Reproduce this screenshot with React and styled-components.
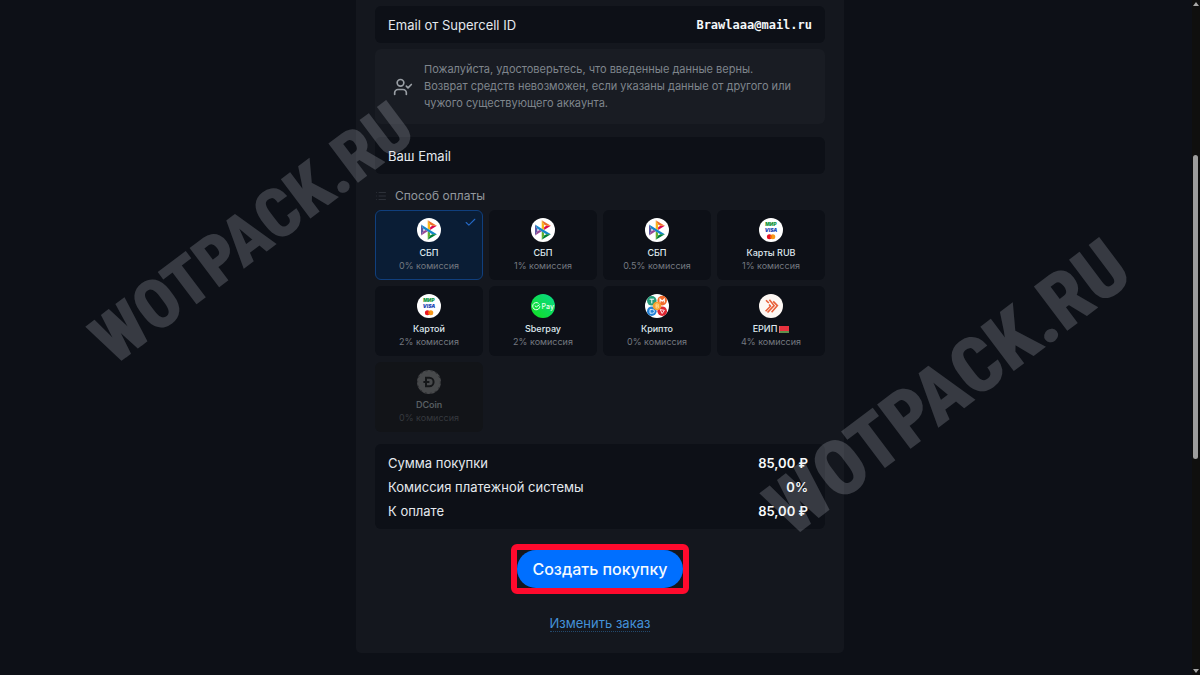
import React, { useState } from "react";
import styled, { createGlobalStyle, css } from "styled-components";
import { Check, List, UserCheck } from "lucide-react";

const GlobalStyle = createGlobalStyle`
  * {
    box-sizing: border-box;
  }
  body {
    margin: 0;
    min-height: 100vh;
    background-color: #0d1017;
    font-family: "Inter", "Liberation Sans", sans-serif;
    color: #e4e9ee;
    overflow: hidden;
  }
`;

const Page = styled.div`
  position: relative;
  min-height: 100vh;
  overflow: hidden;
`;

const Panel = styled.form`
  width: 100%;
  max-width: 488px;
  margin: 0 auto;
  padding: 6px 19px 21px;
  display: flex;
  flex-direction: column;
  background-color: #14171e;
  border-radius: 0 0 5px 5px;
`;

const Field = styled.div`
  display: flex;
  align-items: center;
  min-height: 37px;
  padding: 0 13px;
  background-color: #0d1017;
  border-radius: 6px;
`;

const FieldLabel = styled.label`
  font-size: 13px;
  line-height: 20px;
`;

const FieldInput = styled.input`
  flex: 1;
  min-width: 0;
  padding: 0;
  border: 0;
  outline: none;
  background: transparent;
  color: #f4f7f9;
  font-family: "DejaVu Sans Mono", monospace;
  font-size: 12px;
  font-weight: 700;
  text-align: right;
`;

const Notice = styled.div`
  display: flex;
  align-items: center;
  gap: 11px;
  margin: 6px 0 13px;
  padding: 12px 18px;
  background-color: #191c23;
  border-radius: 6px;
  color: #7f858c;

  svg {
    flex-shrink: 0;
    color: #9a9fa5;
  }
`;

const NoticeText = styled.p`
  margin: 0;
  font-size: 11px;
  line-height: 17px;
`;

const Methods = styled.fieldset`
  margin: 0;
  padding: 0;
  border: 0;
  min-width: 0;
`;

const MethodsTitle = styled.legend`
  display: flex;
  align-items: center;
  gap: 8px;
  padding: 14px 0 6px;
  font-size: 12px;
  line-height: 16px;
  color: #92979d;

  svg {
    color: #2c3038;
  }
`;

const MethodsGrid = styled.div`
  display: grid;
  grid-template-columns: repeat(4, 1fr);
  gap: 6px;
`;

const MethodCard = styled.label`
  position: relative;
  display: flex;
  flex-direction: column;
  align-items: center;
  height: 70px;
  padding-top: 7px;
  border: 1px solid transparent;
  border-radius: 6px;
  background-color: #0d1017;
  cursor: pointer;

  ${({ $active }) =>
    $active &&
    css`
      background-color: #0a1d35;
      border-color: #103f7d;
    `}

  ${({ $disabled }) =>
    $disabled &&
    css`
      background-color: #121418;
      cursor: default;

      > * {
        opacity: 0.36;
      }
    `}
`;

const MethodRadio = styled.input`
  position: absolute;
  inset: 0;
  margin: 0;
  appearance: none;
`;

const MethodCheck = styled(Check)`
  position: absolute;
  top: 5px;
  right: 5px;
  color: #2468c4;
`;

const MethodName = styled.span`
  display: flex;
  align-items: center;
  gap: 2px;
  margin-top: 4px;
  font-size: 9px;
  font-weight: 500;
  line-height: 14px;
  color: #dfe8ee;
`;

const MethodFee = styled.span`
  font-size: 9px;
  line-height: 12px;
  color: #747980;
`;

const Summary = styled.dl`
  margin: 12px 0 15px;
  padding: 7px 17px 6px 13px;
  background-color: #0d1017;
  border-radius: 6px;
`;

const SummaryRow = styled.div`
  display: flex;
  justify-content: space-between;
  font-size: 13px;
  line-height: 24px;
`;

const SummaryValue = styled.dd`
  margin: 0;
  font-weight: 600;
  color: #f8fafb;
`;

const Highlight = styled.div`
  align-self: center;
  border: 6px solid #ff0a2d;
  border-radius: 6px;
`;

const SubmitButton = styled.button`
  display: block;
  height: 38px;
  padding: 0 15px;
  border: 0;
  border-radius: 19px;
  background-color: #006fff;
  color: #f5faff;
  font-family: inherit;
  font-size: 16px;
  font-weight: 500;
`;

const EditLink = styled.a`
  align-self: center;
  margin-top: 22px;
  font-size: 13px;
  line-height: 15px;
  color: #4391d8;
  text-decoration: none;
  border-bottom: 1px dotted #23496d;
`;

const Watermark = styled.span`
  position: absolute;
  left: ${({ $x }) => $x}%;
  top: ${({ $y }) => $y}px;
  transform: translate(-50%, -50%) rotate(-37deg);
  font-family: "Roboto Condensed", "Roboto", sans-serif;
  font-size: ${({ $size }) => $size}px;
  font-weight: 900;
  line-height: 1;
  white-space: nowrap;
  color: rgba(225, 230, 240, 0.2);
  pointer-events: none;
`;

const Scrollbar = styled.div`
  position: fixed;
  top: 0;
  right: 0;
  bottom: 0;
  width: 8px;
  display: flex;
  flex-direction: column;
  justify-content: space-between;
  padding: 2px 1px;
  background-color: #0f0f0e;
`;

const ScrollArrow = styled.span`
  border: 3px solid transparent;
  border-top-width: ${({ $down }) => ($down ? "4px" : "0")};
  border-bottom-width: ${({ $down }) => ($down ? "0" : "4px")};
  border-top-color: #a8a8a8;
  border-bottom-color: #a8a8a8;
`;

const ScrollThumb = styled.span`
  position: absolute;
  top: 23%;
  left: 1px;
  width: 5px;
  height: 45%;
  border-radius: 3px;
  background-color: #9d9d9d;
`;

function Disc({ fill = "#fff", children }) {
  return (
    <svg width="24" height="24" viewBox="0 0 24 24" aria-hidden="true">
      <circle cx="12" cy="12" r="12" fill={fill} />
      {children}
    </svg>
  );
}

function SbpIcon() {
  return (
    <Disc>
      <g transform="translate(4 2.2) scale(0.163)">
        <path d="M0 26.12l14.532 25.975v15.844L.017 93.863 0 26.12z" fill="#5B57A2" />
        <path d="M55.797 42.643l13.617-8.346 27.868-.026-41.485 25.414V42.643z" fill="#D90751" />
        <path d="M55.72 25.967l.077 34.39-14.566-8.95V0l14.49 25.967z" fill="#FAB718" />
        <path d="M97.282 34.271l-27.869.026-13.693-8.33L41.231 0l56.05 34.271z" fill="#ED6F26" />
        <path d="M55.797 94.007V77.322l-14.566-8.78.008 51.458 14.558-25.993z" fill="#63B22F" />
        <path d="M69.38 85.737L14.531 52.095 0 26.12l97.223 59.583-27.844.034z" fill="#1487C9" />
        <path d="M41.24 120l14.556-25.993 13.583-8.27 27.843-.034L41.24 120z" fill="#017F36" />
        <path d="M.017 93.863l41.333-25.32-13.896-8.526-12.922 7.922L.017 93.863z" fill="#984995" />
      </g>
    </Disc>
  );
}

function CardsIcon() {
  return (
    <Disc>
      <g fontFamily="Inter, sans-serif" textAnchor="middle">
        <text x="12" y="7.8" fontSize="4.8" fontWeight="900" fill="#13953f">
          МИР
        </text>
        <text x="12" y="14.4" fontSize="5" fontWeight="900" fontStyle="italic" fill="#1a45b4">
          VISA
        </text>
      </g>
      <circle cx="10.4" cy="18.8" r="2.5" fill="#eb1423" />
      <circle cx="13.8" cy="18.8" r="2.5" fill="#f79a1c" />
      <path d="M12.1 17a2.5 2.5 0 0 1 0 3.6 2.5 2.5 0 0 1 0-3.6z" fill="#ff5f00" />
    </Disc>
  );
}

function SberpayIcon() {
  return (
    <Disc fill="url(#sber)">
      <defs>
        <linearGradient id="sber" x1="0" y1="1" x2="1" y2="0">
          <stop offset="0" stopColor="#13e01d" />
          <stop offset="1" stopColor="#08d98d" />
        </linearGradient>
      </defs>
      <path
        d="M7.6 9.4A3.6 3.6 0 1 0 8.9 12.2M3.8 11.7l1.5 1.2 3.4-2.3"
        fill="none"
        stroke="#effff2"
        strokeWidth="1"
      />
      <text x="10.6" y="14.5" fontFamily="Inter, sans-serif" fontSize="7" fontWeight="500" fill="#effff2">
        Pay
      </text>
    </Disc>
  );
}

function CryptoIcon() {
  return (
    <Disc>
      <circle cx="6.8" cy="6.8" r="4.8" fill="#249b79" />
      <path d="M4.5 5.2h4.6M6.8 5.2v4.2" stroke="#fff" strokeWidth="1" fill="none" />
      <circle cx="17.2" cy="6.6" r="4.8" fill="#f26b2c" />
      <path d="M15.1 8.4V5l2.1 2.2L19.3 5v3.4" stroke="#fff" strokeWidth="1.1" fill="none" />
      <circle cx="6.8" cy="17.2" r="4.8" fill="#2481d4" />
      <path d="M5 15.6h2.6a1.8 1.8 0 0 1 0 3.6H5z" stroke="#d8ecff" strokeWidth="1" fill="none" />
      <circle cx="17.2" cy="17.2" r="4.8" fill="#e02631" />
      <path d="M15.2 15.6l4.2.7-2.2 3.2z" stroke="#fff" strokeWidth="0.9" fill="none" />
      <circle cx="12" cy="12" r="4.3" fill="#f5a02e" />
      <path
        d="M11 10h1.5a1 1 0 0 1 0 2H11zM11 12h1.8a1 1 0 0 1 0 2H11z"
        stroke="#ffe2a4"
        strokeWidth="0.8"
        fill="none"
      />
    </Disc>
  );
}

function EripIcon() {
  return (
    <Disc fill="#fdf7f3">
      <g fill="none" stroke="#e8603a" strokeWidth="1.6">
        <path d="M7 6.2l2.8 2.8" />
        <path d="M10.4 5.8l4.7 5.8-6.6 6.9" />
        <path d="M14.2 7.4l4.2 4.2-5.8 6.6" />
        <path d="M6.6 17.2l4.9-5-1.4-1.8" />
      </g>
    </Disc>
  );
}

function DcoinIcon() {
  return (
    <Disc fill="#a6a6a6">
      <circle cx="12" cy="12" r="11.4" fill="none" stroke="#555" strokeWidth="1" strokeDasharray="2 3" />
      <path
        d="M9 7.8h3.4a4.2 4.2 0 0 1 0 8.4H9zM6.4 12h6"
        fill="none"
        stroke="#1d1d1d"
        strokeWidth="2"
      />
    </Disc>
  );
}

function BelarusFlag() {
  return (
    <svg width="10" height="7" viewBox="0 0 10 7" aria-hidden="true">
      <path d="M0 0h10v5H0z" fill="#e8323e" />
      <path d="M0 5h10v2H0z" fill="#5f8f4c" />
      <path d="M0 0h1v7H0z" fill="#d96a6e" />
    </svg>
  );
}

const METHODS = [
  { id: "sbp", name: "СБП", fee: "0%", Icon: SbpIcon },
  { id: "sbp-2", name: "СБП", fee: "1%", Icon: SbpIcon },
  { id: "sbp-3", name: "СБП", fee: "0.5%", Icon: SbpIcon },
  { id: "cards-rub", name: "Карты RUB", fee: "1%", Icon: CardsIcon },
  { id: "card", name: "Картой", fee: "2%", Icon: CardsIcon },
  { id: "sberpay", name: "Sberpay", fee: "2%", Icon: SberpayIcon },
  { id: "crypto", name: "Крипто", fee: "0%", Icon: CryptoIcon },
  { id: "erip", name: "ЕРИП", fee: "4%", Icon: EripIcon, Flag: BelarusFlag },
  { id: "dcoin", name: "DCoin", fee: "0%", Icon: DcoinIcon, disabled: true },
];

const TOTALS = [
  ["Сумма покупки", "85,00 ₽"],
  ["Комиссия платежной системы", "0%"],
  ["К оплате", "85,00 ₽"],
];

function Method({ method, active, onSelect }) {
  const { id, name, fee, Icon, Flag, disabled } = method;
  return (
    <MethodCard $active={active} $disabled={disabled}>
      <MethodRadio
        type="radio"
        name="method"
        value={id}
        checked={active}
        disabled={disabled}
        onChange={() => onSelect(id)}
      />
      {active && <MethodCheck size={13} strokeWidth={2} />}
      <Icon />
      <MethodName>
        {name}
        {Flag && <Flag />}
      </MethodName>
      <MethodFee>{fee} комиссия</MethodFee>
    </MethodCard>
  );
}

function App() {
  const [method, setMethod] = useState("sbp");
  const [email, setEmail] = useState("");

  return (
    <Page>
      <GlobalStyle />
      <Panel onSubmit={(e) => e.preventDefault()}>
        <Field>
          <FieldLabel htmlFor="supercell">Email от Supercell ID</FieldLabel>
          <FieldInput id="supercell" value="Brawlaaa@mail.ru" readOnly />
        </Field>
        <Notice>
          <UserCheck size={20} strokeWidth={2} />
          <NoticeText>
            Пожалуйста, удостоверьтесь, что введенные данные верны.
            <br />
            Возврат средств невозможен, если указаны данные от другого или
            чужого существующего аккаунта.
          </NoticeText>
        </Notice>
        <Field>
          <FieldLabel htmlFor="email">Ваш Email</FieldLabel>
          <FieldInput
            id="email"
            value={email}
            onChange={(e) => setEmail(e.target.value)}
          />
        </Field>
        <Methods>
          <MethodsTitle>
            <List size={12} strokeWidth={2} />
            Способ оплаты
          </MethodsTitle>
          <MethodsGrid>
            {METHODS.map((item) => (
              <Method
                key={item.id}
                method={item}
                active={item.id === method}
                onSelect={setMethod}
              />
            ))}
          </MethodsGrid>
        </Methods>
        <Summary>
          {TOTALS.map(([label, value]) => (
            <SummaryRow key={label}>
              <dt>{label}</dt>
              <SummaryValue>{value}</SummaryValue>
            </SummaryRow>
          ))}
        </Summary>
        <Highlight>
          <SubmitButton type="submit">Создать покупку</SubmitButton>
        </Highlight>
        <EditLink href="#order">Изменить заказ</EditLink>
      </Panel>
      <Watermark $x={21} $y={233} $size={69}>WOTPACK.RU</Watermark>
      <Watermark $x={79} $y={388} $size={78}>WOTPACK.RU</Watermark>
      <Scrollbar>
        <ScrollArrow />
        <ScrollThumb />
        <ScrollArrow $down />
      </Scrollbar>
    </Page>
  );
}

export default App;
